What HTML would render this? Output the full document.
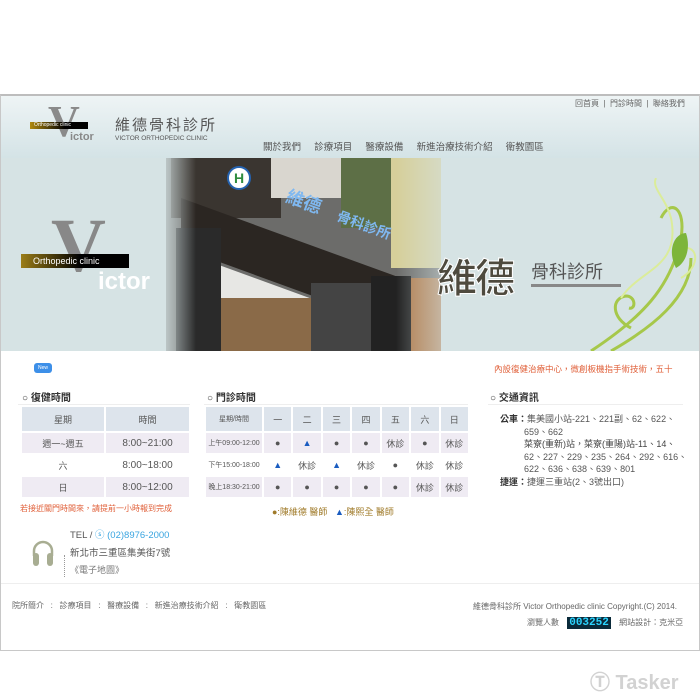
<!DOCTYPE html>
<html><head><meta charset="utf-8"><style>
*{margin:0;padding:0;box-sizing:border-box}
body{width:700px;height:700px;background:#fff;font-family:"Liberation Sans","Noto Sans CJK TC",sans-serif;position:relative;overflow:hidden;color:#444}
.abs{position:absolute}
#frame{left:0;top:94px;width:700px;height:557px;border:1px solid #c8c8c8;border-top:2px solid #bdbdbd}
#hdr{left:1px;top:96px;width:698px;height:62px;background:linear-gradient(#eef4f5,#d4e3e6)}
#ban{left:1px;top:158px;width:698px;height:193px;background:#d6e3e4;overflow:hidden}
.t{font-size:9px;color:#555;white-space:nowrap}
table{border-collapse:separate;border-spacing:2px;font-size:9px;color:#555;text-align:center;table-layout:fixed}
td{height:20px;padding:0}
.h td{background:#dde4ec;height:24px}
.p td{background:#efebf3}
.o td{background:#fff}
</style></head><body>
<div class="abs" id="frame"></div>
<div class="abs" id="hdr"></div>
<!-- logo -->
<div class="abs" style="left:48px;top:100px;font:bold 44px 'Liberation Serif',serif;color:#8a8a8a;line-height:44px">V</div>
<div class="abs" style="left:30px;top:122px;width:58px;height:7px;background:linear-gradient(90deg,#b08a10,#000 60%);color:#fff;font-size:5px;line-height:7px;padding-left:4px">Orthopedic clinic</div>
<div class="abs" style="left:70px;top:131px;font-size:11px;color:#888;font-weight:bold">ictor</div>
<div class="abs" style="left:115px;top:114px;font-size:15px;color:#555;letter-spacing:2px">維德骨科診所</div>
<div class="abs" style="left:115px;top:135px;font-size:6.5px;color:#555">VICTOR ORTHOPEDIC CLINIC</div>
<div class="abs t" style="left:575px;top:98px;font-size:8px;color:#666">回首頁 &nbsp;|&nbsp; 門診時間 &nbsp;|&nbsp; 聯絡我們</div>
<div class="abs t" style="left:263px;top:139px;font-size:9.5px;color:#555">關於我們 &nbsp;&nbsp;&nbsp; 診療項目 &nbsp;&nbsp;&nbsp; 醫療設備 &nbsp;&nbsp;&nbsp; 新進治療技術介紹 &nbsp;&nbsp;&nbsp; 衛教園區</div>
<!-- banner -->
<div class="abs" id="ban">
 <div class="abs" style="left:165px;top:0;width:275px;height:193px;background:#6c6c6a"></div>
 <div class="abs" style="left:170px;top:0;width:110px;height:60px;background:#3a3530"></div>
 <div class="abs" style="left:270px;top:0;width:70px;height:40px;background:#d9d6cf"></div>
 <div class="abs" style="left:340px;top:0;width:50px;height:70px;background:#5d6f46"></div>
 <div class="abs" style="left:390px;top:0;width:50px;height:110px;background:#d6cf9a"></div>
 <div class="abs" style="left:180px;top:40px;width:255px;height:50px;background:#2b2622;transform:skewY(20deg);transform-origin:left top"></div>
 <div class="abs" style="left:185px;top:95px;width:240px;height:40px;background:#e7e7e4;transform:skewY(20deg);transform-origin:left top"></div>
 <div class="abs" style="left:175px;top:70px;width:45px;height:123px;background:#2a2a2a"></div>
 <div class="abs" style="left:220px;top:140px;width:90px;height:53px;background:#8a6a48"></div>
 <div class="abs" style="left:310px;top:125px;width:60px;height:68px;background:#444"></div>
 <div class="abs" style="left:370px;top:118px;width:40px;height:75px;background:#222"></div>
 <div class="abs" style="left:410px;top:120px;width:30px;height:73px;background:#b07a4a"></div>
 <div class="abs" style="left:226px;top:8px;width:24px;height:24px;border-radius:50%;background:#fff;border:2px solid #2563b0;color:#2e8b3e;font:bold 14px sans-serif;text-align:center;line-height:20px">H</div>
 <div class="abs" style="left:285px;top:30px;color:#7fb8f0;font:bold 18px 'Noto Sans CJK TC',sans-serif;transform:rotate(20deg)">維德</div>
 <div class="abs" style="left:335px;top:57px;color:#7fb8f0;font:bold 14px 'Noto Sans CJK TC',sans-serif;transform:rotate(20deg)">骨科診所</div>
 <div class="abs" style="left:395px;top:0;width:80px;height:193px;background:linear-gradient(90deg,rgba(214,227,228,0),#d6e3e4)"></div>
 <div class="abs" style="left:155px;top:0;width:40px;height:193px;background:linear-gradient(90deg,#d6e3e4,rgba(214,227,228,0))"></div>
 <div class="abs" style="left:50px;top:50px;font:bold 76px 'Liberation Serif',serif;color:#888;line-height:76px">V</div>
 <div class="abs" style="left:20px;top:96px;width:108px;height:14px;background:linear-gradient(90deg,#9b7d18,#000 55%);color:#fff;font-size:9px;line-height:14px;padding-left:12px">Orthopedic clinic</div>
 <div class="abs" style="left:97px;top:110px;font-size:24px;color:#fff;font-weight:bold">ictor</div>
 <div class="abs" style="left:436px;top:88px;font:bold 40px 'Noto Sans CJK TC',sans-serif;color:#4e4a3e;-webkit-text-stroke:1px #fff;letter-spacing:-2px">維德</div>
 <div class="abs" style="left:530px;top:100px;font-size:18px;color:#555">骨科診所</div>
 <div class="abs" style="left:530px;top:126px;width:90px;height:3px;background:#888"></div>
 <svg class="abs" style="left:580px;top:20px" width="118" height="173" viewBox="0 0 118 173"><g fill="none" stroke="#a6c84a" stroke-width="3"><path d="M10 173 C60 140 90 110 100 60 C105 30 90 20 80 40"/><path d="M30 173 C70 150 110 120 110 80"/><path d="M50 150 C30 140 30 120 45 118 C55 118 55 132 48 130"/></g><g fill="none" stroke="#dbec9a" stroke-width="2"><path d="M40 120 C60 90 100 90 90 40 C85 20 70 10 75 0"/><path d="M100 100 C118 90 118 70 105 70"/></g><path d="M95 90 C85 70 95 55 105 55 C110 70 105 85 95 90Z" fill="#7db53a"/></svg>
</div>
<!-- content -->
<div class="abs" style="left:34px;top:363px;width:18px;height:10px;border-radius:3px;background:#3d8fe8;color:#fff;font-size:5px;text-align:center;line-height:10px">New</div>
<div class="abs t" style="left:494px;top:363px;color:#e0603a;font-size:8.5px">內設復健治療中心，微創板機指手術技術，五十</div>

<div class="abs t" style="left:22px;top:389px;font-weight:bold;font-size:10px;color:#333">○ 復健時間</div>
<div class="abs" style="left:18px;top:404px;width:172px;height:1px;background:#eee"></div>
<table class="abs" style="left:20px;top:405px;width:171px"><colgroup><col style="width:82px"><col></colgroup><tr class="h"><td>星期</td><td>時間</td></tr>
<tr class="p"><td>週一~週五</td><td style="font-size:10px">8:00~21:00</td></tr>
<tr class="o"><td>六</td><td style="font-size:10px">8:00~18:00</td></tr>
<tr class="p"><td>日</td><td style="font-size:10px">8:00~12:00</td></tr></table>

<div class="abs t" style="left:207px;top:389px;font-weight:bold;font-size:10px;color:#333">○ 門診時間</div>
<div class="abs" style="left:204px;top:404px;width:264px;height:1px;background:#eee"></div>
<table class="abs" style="left:204px;top:405px;width:266px"><colgroup><col style="width:56px"><col><col><col><col><col><col><col></colgroup><tr class="h"><td style="font-size:7px">星期/時間</td><td>一</td><td>二</td><td>三</td><td>四</td><td>五</td><td>六</td><td>日</td></tr>
<tr class="p"><td style="font-size:7px">上午09:00-12:00</td><td>●</td><td style="color:#1a5cc0">▲</td><td>●</td><td>●</td><td>休診</td><td>●</td><td>休診</td></tr>
<tr class="o"><td style="font-size:7px">下午15:00-18:00</td><td style="color:#1a5cc0">▲</td><td>休診</td><td style="color:#1a5cc0">▲</td><td>休診</td><td>●</td><td>休診</td><td>休診</td></tr>
<tr class="p"><td style="font-size:7px">晚上18:30-21:00</td><td>●</td><td>●</td><td>●</td><td>●</td><td>●</td><td>休診</td><td>休診</td></tr></table>
<div class="abs t" style="left:272px;top:505px;color:#a07b2a">●:陳維德 醫師 &nbsp;&nbsp;<span style="color:#1a5cc0">▲</span>:陳熙全 醫師</div>

<div class="abs t" style="left:490px;top:389px;font-weight:bold;font-size:10px;color:#333">○ 交通資訊</div>
<div class="abs" style="left:488px;top:404px;width:195px;height:1px;background:#eee"></div>
<div class="abs" style="left:500px;top:413px;font-size:9px;line-height:12.5px;color:#555;width:200px;white-space:nowrap"><b style="color:#333">公車：</b>集美國小站-221、221副、62、622、<br><span style="padding-left:24px">659、662</span><br><span style="padding-left:24px;color:#444">菜寮(重新)站，菜寮(重陽)站-11、14、</span><br><span style="padding-left:24px">62、227、229、235、264、292、616、</span><br><span style="padding-left:24px">622、636、638、639、801</span><br><b style="color:#333">捷運：</b>捷運三重站(2、3號出口)</div>

<div class="abs t" style="left:20px;top:503px;color:#e0603a;font-size:8px">若接近關門時間來，請提前一小時報到完成</div>
<svg class="abs" style="left:30px;top:538px" width="26" height="30" viewBox="0 0 26 30"><path d="M4 18 V13 A9 9 0 0 1 22 13 V18" fill="none" stroke="#a8ad92" stroke-width="2.5"/><rect x="3" y="15" width="6" height="13" rx="3" fill="#a8ad92"/><rect x="17" y="15" width="6" height="13" rx="3" fill="#a8ad92"/></svg>
<div class="abs" style="left:64px;top:555px;width:1px;height:22px;border-left:1px dotted #999"></div>
<div class="abs t" style="left:70px;top:527px;font-size:9.5px">TEL / <span style="color:#3aa5e0">ⓢ (02)8976-2000</span></div>
<div class="abs t" style="left:70px;top:545px;font-size:9.5px">新北市三重區集美街7號</div>
<div class="abs t" style="left:70px;top:563px;font-size:9px;color:#777">《電子地圖》</div>
<div class="abs" style="left:1px;top:583px;width:698px;height:1px;background:#eee"></div>
<!-- footer -->
<div class="abs t" style="left:12px;top:600px;font-size:8px;color:#666">院所簡介 &nbsp;&nbsp;:&nbsp;&nbsp; 診療項目 &nbsp;&nbsp;:&nbsp;&nbsp; 醫療設備 &nbsp;&nbsp;:&nbsp;&nbsp; 新進治療技術介紹 &nbsp;&nbsp;:&nbsp;&nbsp; 衛教園區</div>
<div class="abs t" style="left:473px;top:601px;font-size:8px;color:#666">維德骨科診所 Victor Orthopedic clinic Copyright.(C) 2014.</div>
<div class="abs t" style="left:527px;top:617px;font-size:8px;color:#666">瀏覽人數 <span style="display:inline-block;background:#0a2a3a;color:#2ad4ff;font:bold 11px 'Liberation Mono',monospace;padding:0 2px;margin:0 6px">003252</span> 網站設計：克米亞</div>
<div class="abs t" style="left:590px;top:666px;font:bold 20px 'Liberation Sans',sans-serif;color:#d2d2d2">Ⓣ Tasker</div>
</body></html>
